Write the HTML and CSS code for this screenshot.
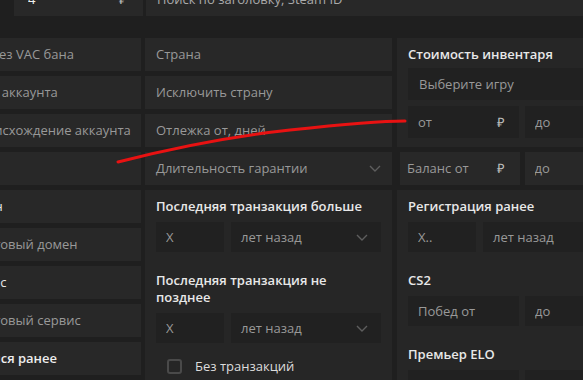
FILE: index.html
```html
<!DOCTYPE html>
<html lang="ru">
<head>
    <meta charset="UTF-8">
    <meta name="viewport" content="width=device-width, initial-scale=1.0">
    <title>Фильтры аккаунтов</title>
    <link rel="stylesheet" href="styles.css">
</head>
<body>

    <div class="filters">
        <!-- Top row: price and search -->
        <div class="topbar">
            <div class="field price">
                <input type="text" value="4">
                <span class="unit">₽</span>
            </div>
            <div class="field search">
                <input type="text" placeholder="Поиск по заголовку, Steam ID">
            </div>
        </div>

        <div class="columns">
            <!-- Left column -->
            <div class="col col-main">
                <label class="field check-field"><span class="box"></span>Без VAC бана</label>
                <div class="field">Дата аккаунта</div>
                <div class="field">Происхождение аккаунта</div>
                <div class="field"></div>
                <div class="field value">Домен</div>
                <div class="field">Почтовый домен</div>
                <div class="field value">Сервис</div>
                <div class="field">Почтовый сервис</div>
                <div class="field title">Брался ранее</div>
            </div>

            <!-- Middle column -->
            <div class="col col-mid">
                <div class="field"><input type="text" placeholder="Страна"></div>
                <div class="field"><input type="text" placeholder="Исключить страну"></div>
                <div class="field"><input type="text" placeholder="Отлежка от, дней"></div>
                <div class="field select">
                    <span>Длительность гарантии</span>
                    <svg width="12" height="7" viewBox="0 0 12 7"><path d="M1 1l5 5 5-5"/></svg>
                </div>

                <div class="panel">
                    <h3>Последняя транзакция больше</h3>
                    <div class="pair years">
                        <div class="field"><input type="text" placeholder="X"></div>
                        <div class="field select">
                            <span>лет назад</span>
                            <svg width="12" height="7" viewBox="0 0 12 7"><path d="M1 1l5 5 5-5"/></svg>
                        </div>
                    </div>

                    <h3>Последняя транзакция не позднее</h3>
                    <div class="pair years">
                        <div class="field"><input type="text" placeholder="X"></div>
                        <div class="field select">
                            <span>лет назад</span>
                            <svg width="12" height="7" viewBox="0 0 12 7"><path d="M1 1l5 5 5-5"/></svg>
                        </div>
                    </div>

                    <label class="checkbox"><span class="box"></span>Без транзакций</label>
                </div>
            </div>

            <!-- Right column -->
            <div class="col col-side">
                <div class="panel inventory">
                    <h3>Стоимость инвентаря</h3>
                    <div class="field game"><input type="text" placeholder="Выберите игру"></div>
                    <div class="pair">
                        <div class="field"><input type="text" placeholder="от"><span class="unit">₽</span></div>
                        <div class="field"><input type="text" placeholder="до"></div>
                    </div>
                </div>

                <div class="balance">
                    <div class="field"><input type="text" placeholder="Баланс от"><span class="unit">₽</span></div>
                    <div class="field"><input type="text" placeholder="до"></div>
                </div>

                <div class="panel">
                    <h3>Регистрация ранее</h3>
                    <div class="pair years">
                        <div class="field"><input type="text" placeholder="X.."></div>
                        <div class="field select">
                            <span>лет назад</span>
                            <svg width="12" height="7" viewBox="0 0 12 7"><path d="M1 1l5 5 5-5"/></svg>
                        </div>
                    </div>

                    <h3>CS2</h3>
                    <div class="pair">
                        <div class="field"><input type="text" placeholder="Побед от"></div>
                        <div class="field"><input type="text" placeholder="до"></div>
                    </div>

                    <h3>Премьер ELO</h3>
                    <div class="pair">
                        <div class="field"><input type="text" placeholder="от"></div>
                        <div class="field"><input type="text" placeholder="до"></div>
                    </div>
                </div>
            </div>
        </div>
    </div>

    <!-- Red marker stroke drawn over the form -->
    <svg class="scribble" width="583" height="380" viewBox="0 0 583 380">
        <path d="M118 162 C165 150 225 137 290 130 S380 121 405 121"/>
    </svg>

</body>
</html>
```

FILE: styles.css
```css
/* Reset some default styles */
* {
    margin: 0;
    padding: 0;
    box-sizing: border-box;
}

body {
    font-family: 'Open Sans', 'Liberation Sans', sans-serif;
    font-size: 13px;
    line-height: 17px;
    background-color: #1f1f1f;
    color: #e6e6e6;
    width: 583px;
    height: 380px;
    overflow: hidden;
    position: relative;
}

.filters {
    width: 700px;
    margin: -17px 0 0 -42px;
}

/* Generic field */
.field {
    height: 33px;
    display: flex;
    align-items: center;
    padding: 0 11px;
    background-color: #282828;
    color: #999;
    white-space: nowrap;
}

input {
    width: 100%;
    min-width: 0;
    background: transparent;
    border: none;
    outline: none;
    font: inherit;
    color: #eee;
}

input::placeholder {
    color: #999;
}

.unit {
    color: #bbb;
    margin: 0 4px 0 6px;
}

/* Top row */
.topbar {
    display: flex;
    gap: 3px;
    padding-left: 56px;
}

.price {
    width: 129px;
    padding: 0 12px 0 14px;
}

.search {
    flex: 1;
}

.search input::placeholder {
    color: #aaa;
}

/* Columns */
.columns {
    display: flex;
    align-items: flex-start;
    margin-top: 22px;
}

.col {
    display: flex;
    flex-direction: column;
    gap: 5px;
}

.col-main {
    width: 183px;
    margin-right: 4px;
}

.col-mid {
    width: 247px;
    margin-right: 5px;
}

.col-side {
    width: 250px;
}

.col-main .value {
    padding-left: 3px;
    color: #e6e6e6;
}

.col-main .title {
    color: #eee;
    font-weight: 600;
}

.check-field {
    gap: 7px;
}

/* Selects */
.select {
    justify-content: space-between;
}

.select svg path {
    fill: none;
    stroke: #5e5e5e;
    stroke-width: 1.4;
}

/* Panels */
.panel {
    background-color: #262626;
    padding: 8px 11px 12px;
}

.panel h3 {
    font-size: 13px;
    line-height: 17px;
    font-weight: 600;
    color: #e8e8e8;
}

.panel .pair + h3 {
    margin-top: 20px;
}

.panel h3 + .pair {
    margin-top: 7px;
}

.pair {
    display: grid;
    grid-template-columns: 1fr 1fr;
    gap: 6px;
}

.pair.years {
    grid-template-columns: 68px 1fr;
    gap: 7px;
}

.panel .field {
    height: 30px;
    background-color: #212121;
    padding: 0 10px;
}

.panel .select {
    padding-right: 13px;
}

.inventory {
    padding-bottom: 9px;
}

.inventory .field {
    height: 32px;
}

.inventory .game {
    margin-top: 5px;
    padding: 0 11px;
}

.inventory .pair {
    margin-top: 6px;
}

.balance {
    display: grid;
    grid-template-columns: 1fr 1fr;
    gap: 5px;
    padding: 0 3px;
}

.balance .field {
    padding: 0 11px 0 7px;
}

.balance .field + .field {
    padding-left: 10px;
}

/* Checkbox */
.box {
    width: 15px;
    height: 15px;
    flex: none;
    border: 2px solid #4a4a4a;
    border-radius: 3px;
}

.checkbox {
    display: flex;
    align-items: center;
    gap: 13px;
    margin-top: 15px;
    padding-left: 11px;
    color: #ddd;
}

/* Marker stroke */
.scribble {
    position: absolute;
    top: 0;
    left: 0;
    pointer-events: none;
}

.scribble path {
    fill: none;
    stroke: #e81212;
    stroke-width: 3;
    stroke-linecap: round;
}
```
